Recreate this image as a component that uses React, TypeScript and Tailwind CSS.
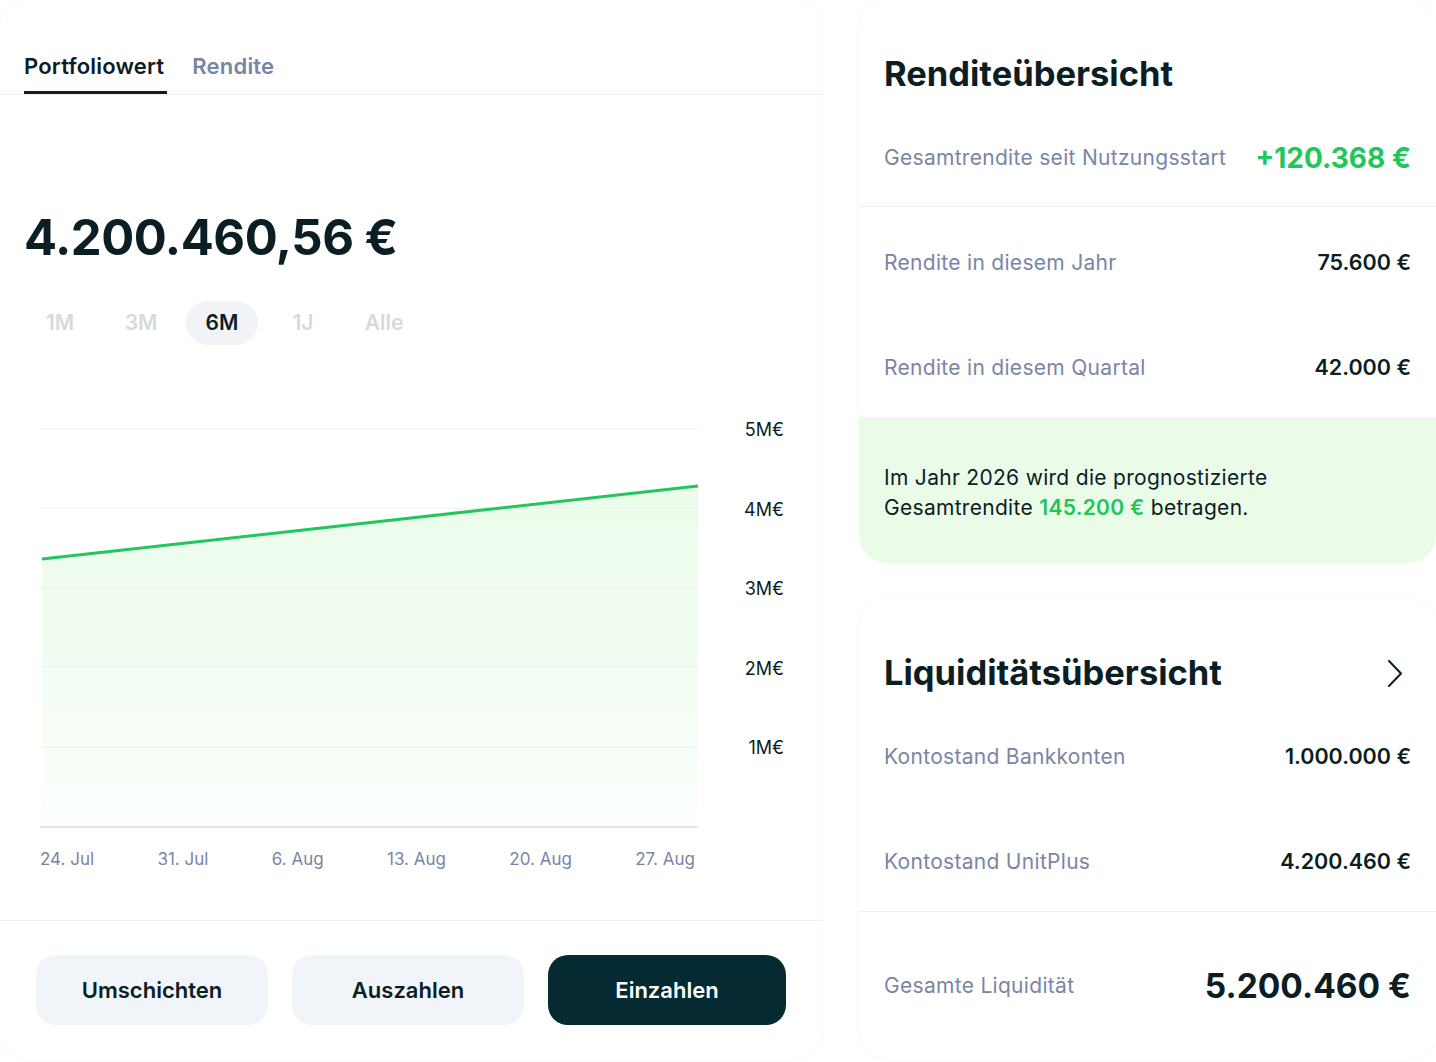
import React from "react";

const DARK = "text-[#0b1e24]";

function Row({ label, value, valueClass }: { label: string; value: string; valueClass: string }) {
  return (
    <div className="flex h-[105px] items-center justify-between px-[25px] pt-[6px]">
      <span className="text-[21px] tracking-[0.3px] text-[#7a85a5]">{label}</span>
      <span className={valueClass}>{value}</span>
    </div>
  );
}

function Chart() {
  const yLabels = ["5M€", "4M€", "3M€", "2M€", "1M€"];
  const xLabels = ["24. Jul", "31. Jul", "6. Aug", "13. Aug", "20. Aug", "27. Aug"];
  return (
    <div className="mt-[83px] flex flex-col">
      <div className="flex">
        <div className="ml-[40px] w-[658px]">
          <svg width="658" height="401" viewBox="0 0 658 401" className="block">
            <defs>
              <linearGradient id="fillg" x1="0" y1="0" x2="0" y2="1">
                <stop offset="0%" stopColor="#ebfcea" />
                <stop offset="55%" stopColor="#f3fdf3" />
                <stop offset="100%" stopColor="#fcfffc" />
              </linearGradient>
            </defs>
            <path d="M2 131 L658 58 L658 399 L2 399 Z" fill="url(#fillg)" />
            {[1, 80, 160, 239, 319].map((y) => (
              <line key={y} x1="0" x2="658" y1={y} y2={y} stroke="#eef0f2" strokeWidth="1" />
            ))}
            <line x1="0" x2="658" y1="399" y2="399" stroke="#e3e5e8" strokeWidth="2" />
            <path d="M2 131 L658 58" stroke="#22c55e" strokeWidth="3" fill="none" />
          </svg>
        </div>
        <div className="flex w-[86px] flex-col items-end">
          {yLabels.map((l) => (
            <div key={l} className="h-[79.6px] -translate-y-[10px]">
              <span className={`text-[18px] leading-[20px] ${DARK}`}>{l}</span>
            </div>
          ))}
        </div>
      </div>
      <div className="ml-[40px] mt-[18px] flex w-[655px] justify-between text-[17px] leading-[24px] text-[#7a85a5]">
        {xLabels.map((l) => (
          <span key={l}>{l}</span>
        ))}
      </div>
    </div>
  );
}

export default function App() {
  return (
    <div
      className="flex h-[1062px] w-[1436px] gap-[36px] overflow-hidden bg-white"
      style={{ fontFamily: "Inter, 'Noto Sans', sans-serif" }}
    >
      {/* Left card */}
      <div className="flex h-[1060px] w-[823px] flex-col rounded-[28px] bg-white shadow-[0_0_3px_rgba(0,0,0,0.06)]">
        <div className="flex gap-[25px] border-b border-[#eef0f2] px-[24px] pt-[52px]">
          <div className={`border-b-[3px] border-[#0b1e24] pb-[11px] pr-[3px] text-[22px] font-semibold leading-[28px] tracking-[0.2px] ${DARK}`}>
            Portfoliowert
          </div>
          <div className="pb-[11px] text-[22px] font-semibold leading-[28px] tracking-[0.2px] text-[#7a85a5]">Rendite</div>
        </div>

        <div className={`ml-[24px] mt-[118px] text-[49px] font-bold leading-[50px] tracking-[-0.5px] ${DARK}`}>
          4.200.460,56 €
        </div>

        <div className="ml-[24px] mt-[38px] flex gap-[9px]">
          {["1M", "3M", "6M", "1J", "Alle"].map((p) => (
            <div
              key={p}
              className={
                p === "6M"
                  ? `flex h-[44px] w-[72px] items-center justify-center rounded-full bg-[#f1f3f6] text-[21px] font-semibold ${DARK}`
                  : "flex h-[44px] w-[72px] items-center justify-center rounded-full text-[21px] font-semibold text-[#d6dade]"
              }
            >
              {p}
            </div>
          ))}
        </div>

        <Chart />

        <div className="mt-[49px] border-t border-[#eef0f2]" />

        <div className="ml-[36px] mt-[34px] flex gap-[24px]">
          <button className={`h-[70px] w-[232px] rounded-[20px] bg-[#f1f4f8] text-[22px] font-semibold ${DARK}`}>
            Umschichten
          </button>
          <button className={`h-[70px] w-[232px] rounded-[20px] bg-[#f1f4f8] text-[22px] font-semibold ${DARK}`}>
            Auszahlen
          </button>
          <button className="h-[70px] w-[238px] rounded-[20px] bg-[#062a32] text-[22px] font-semibold text-white">
            Einzahlen
          </button>
        </div>
      </div>

      {/* Right column */}
      <div className="flex w-[577px] flex-col gap-[35px]">
        <div className="flex flex-col overflow-hidden rounded-[28px] bg-white shadow-[0_0_3px_rgba(0,0,0,0.06)]">
          <div className={`px-[25px] pt-[54px] text-[34.5px] font-bold leading-[40px] ${DARK}`}>Renditeübersicht</div>
          <div className="flex h-[113px] items-center justify-between border-b border-[#eef0f2] px-[25px] pt-[16px]">
            <span className="text-[21px] tracking-[0.3px] text-[#7a85a5]">Gesamtrendite seit Nutzungsstart</span>
            <span className="text-[28px] font-bold text-[#20c65a]">+120.368 €</span>
          </div>
          <Row label="Rendite in diesem Jahr" value="75.600 €" valueClass={`text-[21.5px] font-semibold ${DARK}`} />
          <Row label="Rendite in diesem Quartal" value="42.000 €" valueClass={`text-[21.5px] font-semibold ${DARK}`} />
          <div className={`flex h-[146px] flex-col justify-center rounded-b-[28px] bg-[#eafce8] px-[25px] pt-[6px] text-[21px] leading-[30px] tracking-[0.3px] ${DARK}`}>
            <p>Im Jahr 2026 wird die prognostizierte</p>
            <p>
              Gesamtrendite <span className="font-semibold text-[#20c65a]">145.200 €</span> betragen.
            </p>
          </div>
        </div>

        <div className="flex h-[462px] flex-col rounded-[28px] bg-white shadow-[0_0_3px_rgba(0,0,0,0.06)]">
          <div className="flex items-center justify-between pl-[25px] pr-[34px] pt-[55px]">
            <span className={`text-[34.5px] font-bold leading-[40px] ${DARK}`}>Liquiditätsübersicht</span>
            <svg width="14" height="27" viewBox="0 0 14 27" fill="none">
              <path d="M1 1 L13 13.5 L1 26" stroke="#0b1e24" strokeWidth="2" strokeLinecap="round" strokeLinejoin="round" />
            </svg>
          </div>
          <div className="mt-[8px]">
            <Row label="Kontostand Bankkonten" value="1.000.000 €" valueClass={`text-[21.5px] font-semibold ${DARK}`} />
          </div>
          <div className="border-b border-[#eef0f2]">
            <Row label="Kontostand UnitPlus" value="4.200.460 €" valueClass={`text-[21.5px] font-semibold ${DARK}`} />
          </div>
          <div className="flex flex-1 items-center justify-between px-[25px]">
            <span className="text-[21px] tracking-[0.3px] text-[#7a85a5]">Gesamte Liquidität</span>
            <span className={`text-[33.5px] font-bold ${DARK}`}>5.200.460 €</span>
          </div>
        </div>
      </div>
    </div>
  );
}
